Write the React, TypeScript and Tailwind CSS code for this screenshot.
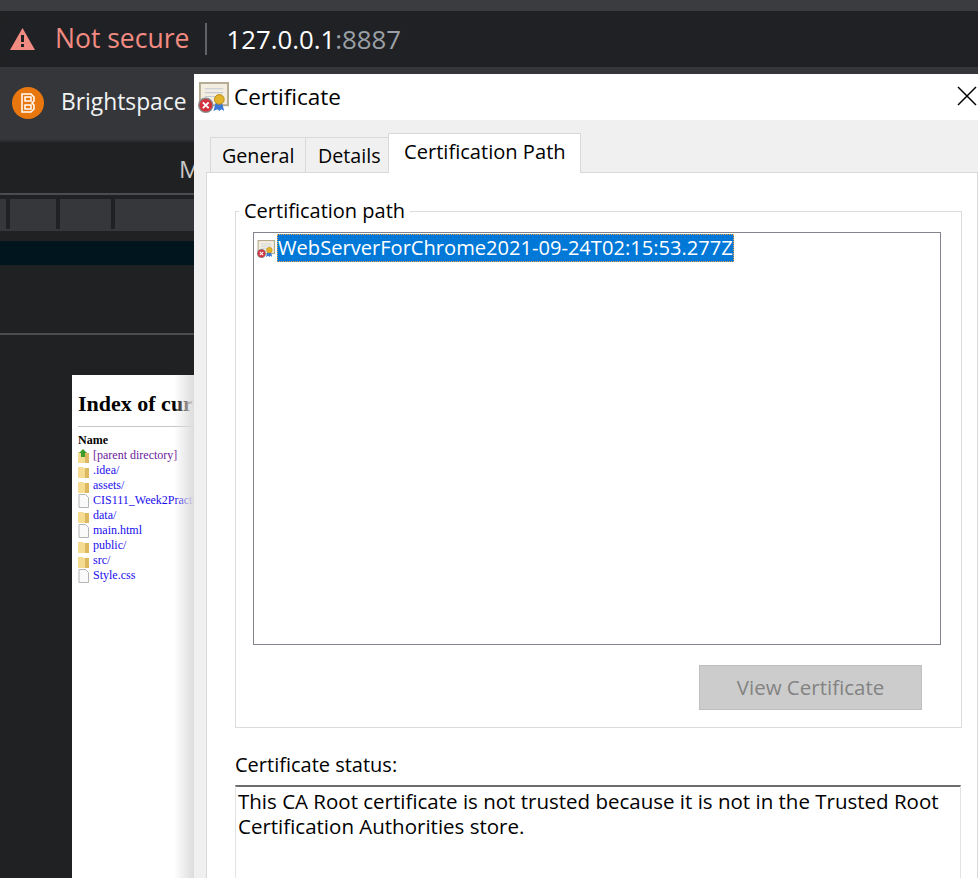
const files = [
  { name: "[parent directory]", icon: "up", visited: true },
  { name: ".idea/", icon: "folder" },
  { name: "assets/", icon: "folder" },
  { name: "CIS111_Week2Practice/", icon: "file" },
  { name: "data/", icon: "folder" },
  { name: "main.html", icon: "file" },
  { name: "public/", icon: "folder" },
  { name: "src/", icon: "folder" },
  { name: "Style.css", icon: "file" },
];

function FileIcon({ kind }: { kind: string }) {
  if (kind === "file") {
    return (
      <svg width="11" height="14" viewBox="0 0 11 14" className="shrink-0">
        <path d="M1 .5h6.500L10.500 3.500V13.500H1z" fill="#fafafa" stroke="#b4b4b4" />
      </svg>
    );
  }
  return (
    <svg width="11" height="14" viewBox="0 0 11 14" className="shrink-0">
      <path d="M0 3h5l1 1h5v10H0z" fill="#f5dc92" />
      <path d="M7 4h4v10H7z" fill="#dcb961" />
      {kind === "up" && <path d="M5 0l4 4H7v4H3V4H1z" fill="#3f9c2a" />}
    </svg>
  );
}

// the certificate with the red error badge, used big in the title bar and small in the tree
function CertIcon({ size }: { size: number }) {
  return (
    <svg width={size} height={size} viewBox="0 0 32 32">
      <rect x="2" y="1" width="29" height="23" fill="#f3eee0" stroke="#b5ab92" strokeWidth="2" />
      <path d="M7 7h19M7 11h19M7 15h12" stroke="#c4cbd6" strokeWidth="1.200" />
      <path d="M18 22l-2 8 4-2 2 2 2-2 3 2-2-8z" fill="#3a78d8" />
      <circle cx="22" cy="18" r="5" fill="#e3b32c" stroke="#b98a14" />
      <circle cx="8" cy="24" r="8" fill="#8a8a8a" />
      <circle cx="8" cy="24" r="6.500" fill="#d3303c" />
      <path d="M5 21l6 6M11 21l-6 6" stroke="#fff" strokeWidth="2" />
    </svg>
  );
}

export default function App() {
  return (
    <div className="relative h-[878px] w-[978px] overflow-hidden bg-[#202123] font-['Open_Sans',sans-serif]">
      {/* Browser chrome */}
      <div className="h-[11px] bg-[#3b3c40]" />
      <div className="flex h-[56px] items-center rounded-l-[28px] bg-[#202124] pl-[10px]">
        <svg width="25" height="22" viewBox="0 0 25 22" className="shrink-0">
          <path d="M12.500 0L25 22H0z" fill="#f28b82" />
          <path d="M11 7h3v7h-3zM11 16h3v3h-3z" fill="#202124" />
        </svg>
        <span className="ml-[20px] text-[26.500px] text-[#f28b82]">Not secure</span>
        <span className="ml-[16px] mr-[19px] h-[32px] w-[2px] bg-[#5f6368]" />
        <span className="text-[25.800px] text-white">127.0.0.1</span>
        <span className="text-[25.800px] text-[#9aa0a6]">:8887</span>
      </div>
      <div className="flex h-[73px] items-center bg-[#35363a] pb-[2px] pl-[12px]">
        <svg width="32" height="32" viewBox="0 0 32 32" className="shrink-0">
          <circle cx="16" cy="16" r="16" fill="#e8770f" />
          <path d="M10 7h9l3 3v4l-2 2 2 2v4l-3 3h-9zM13 10v4h6v-4zM13 18v4h6v-4z" fill="none" stroke="#fff" strokeWidth="1.500" />
        </svg>
        <span className="ml-[17px] text-[22.800px] text-[#f1f3f4]">Brightspace</span>
      </div>

      {/* Page behind the dialog */}
      <div className="h-[2px] bg-[#2b2c2f]" />
      <div className="h-[51px] pl-[179px] pt-[11px] text-[24px] leading-[32px] text-[#c8c8c8]">M</div>
      <div className="h-[2px] bg-[#4a4c50]" />
      <div className="mt-[4px] flex h-[32px] items-start bg-[#36373b]">
        <div className="ml-[6px] h-[30px] w-[4px] bg-[#202123]" />
        <div className="ml-[46px] h-[30px] w-[4px] bg-[#202123]" />
        <div className="ml-[51px] h-[30px] w-[4px] bg-[#202123]" />
      </div>
      <div className="mt-[10px] h-[24px] bg-[#00151e]" />
      <div className="mt-[68px] h-[2px] bg-[#4a4c50]" />

      <div className="absolute left-[72px] top-[375px] h-[503px] w-[122px] overflow-hidden bg-white pl-[6px] font-['Liberation_Serif',serif] text-black">
        <h1 className="mt-[15px] w-[300px] whitespace-nowrap text-[22px] font-bold leading-[28px]">Index of current directory</h1>
        <div className="mt-[8px] h-px bg-[#c8c8c8]" />
        <div className="mt-[6px] text-[12px] font-bold leading-[15px]">Name</div>
        {files.map((f) => (
          <div key={f.name} className="flex h-[15px] w-[200px] items-center gap-[4px] text-[12px] leading-[15px]">
            <FileIcon kind={f.icon} />
            <span className={f.visited ? "text-[#6b1a9c]" : "text-[#1a0dee]"}>{f.name}</span>
          </div>
        ))}
        <div className="absolute right-0 top-0 h-full w-[20px] bg-gradient-to-r from-transparent to-[#dcdcdc]" />
      </div>

      {/* Certificate dialog */}
      <div className="absolute left-[194px] top-[74px] h-[804px] w-[784px] overflow-hidden bg-[#f0f0f0] text-black">
        <div className="flex h-[46px] items-center bg-white pl-[4px]">
          <CertIcon size={31} />
          <span className="ml-[5px] text-[22.500px]">Certificate</span>
          <svg width="20" height="20" viewBox="0 0 20 20" className="mb-[2px] ml-auto mr-px">
            <path d="M1 1l18 18M19 1L1 19" stroke="#000" strokeWidth="1.500" />
          </svg>
        </div>

        <div className="ml-[16px] mt-[13px] flex items-end">
          <div className="h-[35px] w-[95px] border border-b-0 border-r-0 border-[#d9d9d9] pl-[11px] pt-[4px] text-[19.700px] leading-[28px]">General</div>
          <div className="h-[35px] w-[83px] border border-b-0 border-r-0 border-[#d9d9d9] pl-[12px] pt-[4px] text-[19.700px] leading-[28px]">Details</div>
          <div className="relative z-10 -mb-px h-[40px] w-[193px] border border-b-0 border-[#d9d9d9] bg-white pl-[15px] pt-[3px] text-[20.100px] leading-[30px]">Certification Path</div>
        </div>

        <div className="ml-[12px] h-[800px] border border-[#d9d9d9] bg-white pl-[28px] pt-[38px]">
          <div className="relative h-[517px] w-[727px] border border-[#dcdcdc]">
            <span className="absolute -top-[16px] left-[3px] bg-white px-[5px] text-[20px] leading-[30px]">Certification path</span>
            <div className="ml-[17px] mt-[20px] h-[413px] w-[688px] border border-[#82858c] pl-[3px] pt-px">
              <div className="flex items-start">
                <span className="mr-[2px] mt-[6px]"><CertIcon size={18} /></span>
                <span className="h-[28px] whitespace-nowrap border border-dotted border-[#f2a040] bg-[#0078d7] text-[20.100px] leading-[26px] text-white">WebServerForChrome2021-09-24T02:15:53.277Z</span>
              </div>
            </div>
            <button className="ml-[463px] mt-[20px] h-[45px] w-[223px] border border-[#bfbfbf] bg-[#cccccc] text-[20.500px] text-[#838383]">View Certificate</button>
          </div>

          <div className="mt-[22px] text-[20px] leading-[30px]">Certificate status:</div>
          <div className="mt-[5px] h-[200px] w-[726px] border border-t-2 border-[#e3e3e3] border-t-[#6d6d6d] pl-[2px] pt-[2px] text-[20.500px] leading-[25px]">
            This CA Root certificate is not trusted because it is not in the Trusted Root Certification Authorities store.
          </div>
        </div>
      </div>
    </div>
  );
}
